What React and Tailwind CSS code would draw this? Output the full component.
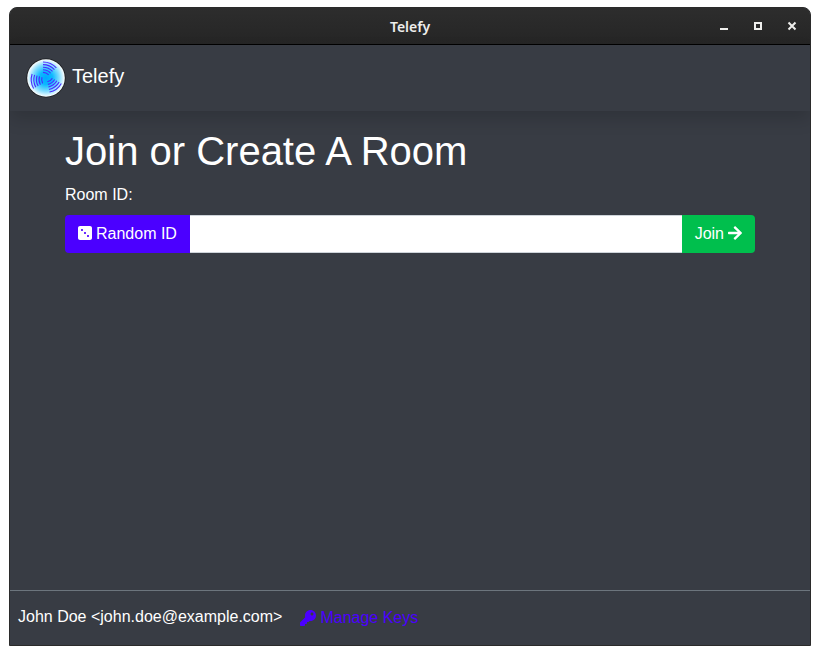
import { FaArrowRight, FaDiceThree, FaKey } from "react-icons/fa";

const ARC_RADII = [18, 15.4, 12.8, 10.2, 7.6];

function arcPath(radius) {
  const end = (-42 * Math.PI) / 180;
  const x2 = radius * Math.cos(end) - 3;
  const y2 = radius * Math.sin(end) + 2;
  return `M-3 ${2 - radius}A${radius} ${radius} 0 0 1 ${x2} ${y2}`;
}

function Logo() {
  return (
    <svg className="size-10" viewBox="-20 -20 40 40" aria-hidden="true">
      <defs>
        <radialGradient id="logo-glow">
          <stop offset="0" stopColor="#00a8ff" />
          <stop offset="0.35" stopColor="#0cb8ff" />
          <stop offset="0.7" stopColor="#7fdcff" />
          <stop offset="1" stopColor="#ffffff" />
        </radialGradient>
      </defs>
      <circle r="19.6" fill="#17191c" />
      <circle r="18.8" fill="url(#logo-glow)" />
      {[0, 120, 240].map((angle) => (
        <g key={angle} transform={`rotate(${angle})`} fill="none" stroke="#4a2cff" strokeWidth="1.1">
          {ARC_RADII.map((radius) => (
            <path key={radius} d={arcPath(radius)} />
          ))}
        </g>
      ))}
    </svg>
  );
}

function WindowButton({ label, children }) {
  return (
    <button type="button" aria-label={label} className="flex size-6 items-center justify-center">
      <svg className="size-2.5" viewBox="0 0 10 10" fill="none" stroke="#eeeeec" strokeWidth="2">
        {children}
      </svg>
    </button>
  );
}

function TitleBar() {
  return (
    <header className="grid h-[37px] shrink-0 grid-cols-[1fr_auto_1fr] items-center border-b border-black bg-linear-to-b from-[#2d2d2d] to-[#252525] pr-1.5">
      <span />
      <span className="pt-0.5 pl-1.5 font-['Noto_Sans',sans-serif] text-sm font-semibold text-[#eeeeec]">Telefy</span>
      <div className="flex justify-end gap-2.5">
        <WindowButton label="Minimize">
          <path d="M1 8h8" />
        </WindowButton>
        <WindowButton label="Maximize">
          <path d="M2 2h6v6h-6z" />
        </WindowButton>
        <WindowButton label="Close">
          <path d="M1.5 1.5l7 7M8.5 1.5l-7 7" />
        </WindowButton>
      </div>
    </header>
  );
}

export default function App() {
  return (
    <div className="h-screen bg-white px-[9px] pt-[7px] pb-[9px] font-['Liberation_Sans',Arial,sans-serif] text-base text-white">
      <div className="flex h-full flex-col overflow-hidden rounded-t-lg border border-[#2b2b2b] bg-[#383c44]">
        <TitleBar />
        <nav className="flex h-[66px] shrink-0 items-center px-4 shadow-[0_8px_16px_rgba(0,0,0,0.15)]">
          <a href="#" className="flex items-center gap-1.5 text-xl">
            <Logo />
            <span className="pb-1">Telefy</span>
          </a>
        </nav>
        <main className="min-h-0 grow px-[55px] pt-4">
          <h1 className="mb-2 text-[40px] leading-12">Join or Create A Room</h1>
          <form onSubmit={(event) => event.preventDefault()}>
            <label htmlFor="room-id" className="mb-2 block leading-6">
              Room ID:
            </label>
            <div className="flex h-[38px]">
              <button type="button" className="flex items-center gap-1 rounded-l bg-[#4b00ff] px-[13px]">
                <FaDiceThree className="mb-0.5 h-4 w-3.5" />
                Random ID
              </button>
              <input
                id="room-id"
                type="text"
                className="min-w-0 grow border-y border-[#ced4da] bg-white px-3 text-[#495057] outline-none"
              />
              <button type="submit" className="flex items-center gap-1 rounded-r bg-[#00bf4d] px-[13px]">
                Join
                <FaArrowRight className="mb-0.5 h-4 w-3.5" />
              </button>
            </div>
          </form>
        </main>
        <footer className="flex h-[55px] shrink-0 items-center gap-[18px] border-t border-[#6c757d] px-2">
          <span className="pb-0.5">John Doe &lt;john.doe@example.com&gt;</span>
          <a href="#keys" className="flex items-center gap-1 text-[#4b00ff]">
            <FaKey />
            Manage Keys
          </a>
        </footer>
      </div>
    </div>
  );
}
